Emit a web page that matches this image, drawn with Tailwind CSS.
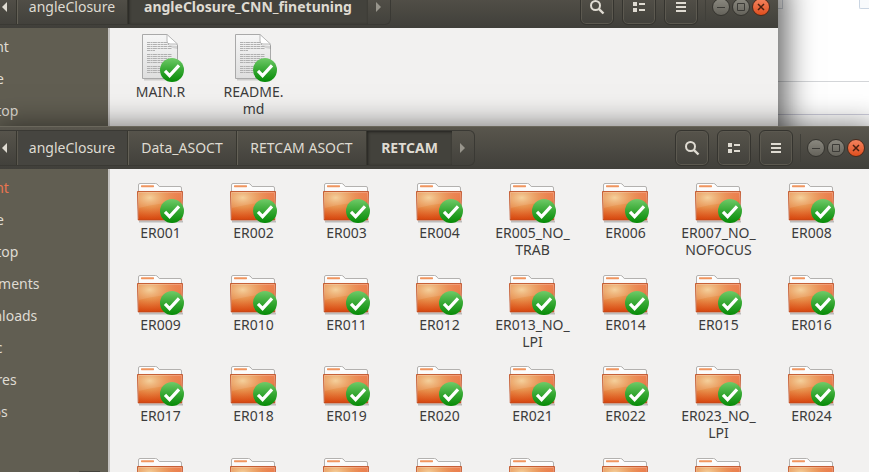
<!DOCTYPE html>
<html lang="en">
<head>
<meta charset="utf-8">
<title>Files</title>
<script src="https://cdn.jsdelivr.net/npm/@tailwindcss/browser@4"></script>
</head>
<body class="relative h-screen overflow-hidden bg-white font-['Noto_Sans',sans-serif] text-sm">

<svg class="absolute size-0" aria-hidden="true">
  <defs>
    <linearGradient id="gBody" x1="0" y1="0" x2="0" y2="1"><stop offset="0" stop-color="#ec7442"/><stop offset=".55" stop-color="#e36c30"/><stop offset="1" stop-color="#d6470f"/></linearGradient>
    <radialGradient id="gGlow" cx=".27" cy=".22" r=".75"><stop offset="0" stop-color="#f4cc92"/><stop offset=".45" stop-color="#e9a058" stop-opacity=".7"/><stop offset="1" stop-color="#e6702f" stop-opacity="0"/></radialGradient>
    <linearGradient id="gTab" x1="0" y1="0" x2="0" y2="1"><stop offset="0" stop-color="#ffffff"/><stop offset=".6" stop-color="#fafafa"/><stop offset="1" stop-color="#d4d2d0"/></linearGradient>
    <linearGradient id="gCheck" x1="0" y1="0" x2="0" y2="1"><stop offset="0" stop-color="#6fca68"/><stop offset=".5" stop-color="#36a833"/><stop offset="1" stop-color="#058a05"/></linearGradient>
    <linearGradient id="gPage" x1="0" y1="0" x2="0" y2="1"><stop offset="0" stop-color="#f6f6f6"/><stop offset="1" stop-color="#dedede"/></linearGradient>
  </defs>
  <symbol id="check" viewBox="0 0 24 24">
    <circle cx="12" cy="12" r="12" fill="url(#gCheck)"/>
    <path d="M5 12.8 9.6 17.6 19 7.4" fill="none" stroke="#fff" stroke-width="3.2"/>
  </symbol>
  <symbol id="folder" viewBox="0 0 52 41">
    <path d="M3 38.500h44" stroke="#000" stroke-opacity=".22" stroke-width="2"/>
    <path d="M2.500 12V2q0-1.500 1.500-1.500h15.500q1.500 0 2.500 1.500l1.200 1.500H44q1.500 0 1.500 1.500v7z" fill="url(#gTab)" stroke="#b3b1af"/>
    <rect x="5" y="2.200" width="13" height="2" rx=".6" fill="#f0955f"/>
    <path d="M1.500 8.500h45l-.7 28.500h-43.600z" fill="url(#gBody)"/>
    <path d="M1.500 8.500h45l-.7 28.500h-43.600z" fill="url(#gGlow)"/>
    <path d="M2.500 9.500h43l-.3 9q-20 1-42.400 6.500z" fill="#fff" fill-opacity=".1"/>
    <path d="M2.500 36V9.500H45.500V36" fill="none" stroke="#fff" stroke-opacity=".25"/>
    <path d="M1.500 8.500h45l-.7 28.500h-43.600z" fill="none" stroke="#b8451c" stroke-opacity=".75"/>
    <use href="#check" x="24" y="16" width="24" height="24"/>
  </symbol>
  <symbol id="page" viewBox="0 0 52 49">
    <path d="M8 45.500h35" stroke="#000" stroke-opacity=".15" stroke-width="2"/>
    <path d="M6.500.500H31L41.500 11v33.500h-35z" fill="url(#gPage)" stroke="#a9a9a9"/>
    <path d="M31 .500V7q0 3 3 3h7.500z" fill="#fff" stroke="#b9b9b9"/>
    <path d="M32 8.500q.5 2.500 3 3l6.500.500v3q-9-1-9.500-6.500z" fill="#000" fill-opacity=".12"/>
    <path d="M11 8.500h20M11 10.500h22M11 12.500h25M11 14.500h25M11 16.500h8M11 20.500h25M11 22.500h25M11 24.500h22M11 26.500h25M11 28.500h21M11 32.500h25M11 34.500h13M11 36.500h25M11 38.500h14" stroke="#b0b0b0" stroke-dasharray="3 .5 2 .4 4 .6"/>
    <use href="#check" x="24" y="24" width="24" height="24"/>
  </symbol>
  <symbol id="search" viewBox="0 0 16 16">
    <circle cx="6.500" cy="6.500" r="4.500" fill="none" stroke="#dfdbd2" stroke-width="2"/>
    <path d="M9.800 9.800 14.500 14.500" stroke="#dfdbd2" stroke-width="2.400"/>
  </symbol>
  <symbol id="views" viewBox="0 0 16 16"><path d="M2 3h4v4H2zM2 9h4v4H2zM8 4h6v2H8zM8 10h6v2H8z" fill="#dfdbd2"/></symbol>
  <symbol id="menu" viewBox="0 0 16 16"><path d="M3 3h10v2H3zM3 7h10v2H3zM3 11h10v2H3z" fill="#dfdbd2"/></symbol>
  <symbol id="min" viewBox="0 0 18 18"><path d="M5 9.500h8" stroke="#3c3b37"/></symbol>
  <symbol id="max" viewBox="0 0 18 18"><path d="M5.500 5.500h7v7h-7z" fill="none" stroke="#3c3b37"/></symbol>
  <symbol id="close" viewBox="0 0 18 18"><path d="M6 6l6 6M12 6l-6 6" stroke="#4a2010" stroke-width="1.500"/></symbol>
</svg>

<!-- Page behind the windows -->
<main class="absolute inset-0 flex flex-col items-stretch" aria-hidden="true">
  <div class="flex h-[81px] items-start justify-end">
    <div class="mr-[76px] h-[9px] w-8 border-r border-b border-gray-300"></div>
    <div class="h-[9px] w-[10px] rounded-bl-xs border-b border-l border-slate-300 bg-slate-50"></div>
  </div>
  <div class="h-[33px] border-t border-[#d3d5d8]"></div>
  <div class="grow border-t border-[#d0d0de]"></div>
</main>

<!-- Rear window -->
<section class="absolute top-[-15px] right-[91px] left-0 flex h-[170px] flex-col shadow-[0_4px_28px_8px_rgba(0,0,0,0.62)]" aria-label="angleClosure_CNN_finetuning">
  <header class="flex h-[43px] shrink-0 items-center justify-between border-t border-[#6a675c] bg-linear-to-b from-[#59564d] to-[#403f3a] pr-[8px]">
    <nav class="flex h-9 items-stretch rounded-r-md border border-l-0 border-[#3a3934] text-[#dfdbd2]" aria-label="Path">
      <button class="flex w-4 items-center" aria-label="Back"><svg class="h-3 w-2" viewBox="0 0 8 12"><path d="M7 1v10L2 6z" fill="#dfdbd2"/></svg></button>
      <button class="w-[111px] border-l border-[#37362f] shadow-[inset_1px_0_#646157]">angleClosure</button>
      <button class="w-[241px] border-l border-[#37362f] bg-[#43423c] font-bold shadow-[inset_1px_1px_3px_rgba(0,0,0,0.5)]">angleClosure_CNN_finetuning</button>
      <button class="flex w-[22px] items-center justify-center" aria-label="Forward"><svg class="h-3 w-2" viewBox="0 0 8 12"><path d="M1 1v10L6 6z" fill="#98958c"/></svg></button>
    </nav>
    <div class="flex items-center">
      <div class="flex gap-2">
        <button class="flex h-9 w-[34px] items-center justify-center rounded-md border border-[#35342f] shadow-[inset_0_0_0_1px_#5c5950]" aria-label="Search"><svg class="size-4"><use href="#search"/></svg></button>
        <button class="flex h-9 w-[34px] items-center justify-center rounded-md border border-[#35342f] shadow-[inset_0_0_0_1px_#5c5950]" aria-label="View"><svg class="size-4"><use href="#views"/></svg></button>
        <button class="flex h-9 w-[34px] items-center justify-center rounded-md border border-[#35342f] shadow-[inset_0_0_0_1px_#5c5950]" aria-label="Menu"><svg class="size-4"><use href="#menu"/></svg></button>
      </div>
      <div class="mr-[6px] ml-[7px] h-7 w-px bg-[#403f39]"></div>
      <div class="flex gap-[2px]">
        <button class="size-[18px] rounded-full border border-[#35342f] bg-linear-to-b from-[#8a887f] to-[#65635b]" aria-label="Minimize"><svg class="size-4" viewBox="1 1 16 16"><use href="#min" width="18" height="18"/></svg></button>
        <button class="size-[18px] rounded-full border border-[#35342f] bg-linear-to-b from-[#8a887f] to-[#65635b]" aria-label="Maximize"><svg class="size-4" viewBox="1 1 16 16"><use href="#max" width="18" height="18"/></svg></button>
        <button class="size-[18px] rounded-full border border-[#4a2a1c] bg-linear-to-b from-[#f4825c] to-[#e04e1b]" aria-label="Close"><svg class="size-4" viewBox="1 1 16 16"><use href="#close" width="18" height="18"/></svg></button>
      </div>
    </div>
  </header>
  <div class="flex grow overflow-hidden">
    <aside class="w-[110px] shrink-0 overflow-hidden border-r-2 border-[#c4c2c0] bg-[#615e52] pt-[3px] text-[#dfdbd2]">
      <ul class="-ml-9 leading-8"><li>Recent</li><li>Home</li><li>Desktop</li></ul>
    </aside>
    <div class="grid grow grid-cols-[repeat(auto-fill,93px)] bg-[#f2f1f0] pt-[6px] pl-[4px] text-[#3c3c3c]" data-items="MAIN.R|README./md" data-icon="page"></div>
  </div>
</section>

<!-- Front window -->
<section class="absolute top-[126px] right-[-4px] bottom-0 left-0 flex flex-col shadow-[0_4px_28px_4px_rgba(0,0,0,0.55)]" aria-label="RETCAM">
  <header class="flex h-[43px] shrink-0 items-center justify-between border-t border-[#6a675c] bg-linear-to-b from-[#59564d] to-[#403f3a] pr-[8px]">
    <nav class="flex h-9 items-stretch rounded-r-md border border-l-0 border-[#3a3934] text-[#dfdbd2]" aria-label="Path">
      <button class="flex w-4 items-center" aria-label="Back"><svg class="h-3 w-2" viewBox="0 0 8 12"><path d="M7 1v10L2 6z" fill="#dfdbd2"/></svg></button>
      <button class="w-[111px] border-l border-[#37362f] bg-[#464540] shadow-[inset_1px_0_#5c5950]">angleClosure</button>
      <button class="w-[109px] border-l border-[#37362f] shadow-[inset_1px_0_#646157]">Data_ASOCT</button>
      <button class="w-[130px] border-l border-[#37362f] shadow-[inset_1px_0_#646157]">RETCAM ASOCT</button>
      <button class="w-[86px] border-l border-[#37362f] bg-[#43423c] font-bold shadow-[inset_1px_1px_3px_rgba(0,0,0,0.5)]">RETCAM</button>
      <button class="flex w-[22px] items-center justify-center" aria-label="Forward"><svg class="h-3 w-2" viewBox="0 0 8 12"><path d="M1 1v10L6 6z" fill="#98958c"/></svg></button>
    </nav>
    <div class="flex items-center">
      <div class="flex gap-2">
        <button class="flex h-9 w-[34px] items-center justify-center rounded-md border border-[#35342f] shadow-[inset_0_0_0_1px_#5c5950]" aria-label="Search"><svg class="size-4"><use href="#search"/></svg></button>
        <button class="flex h-9 w-[34px] items-center justify-center rounded-md border border-[#35342f] shadow-[inset_0_0_0_1px_#5c5950]" aria-label="View"><svg class="size-4"><use href="#views"/></svg></button>
        <button class="flex h-9 w-[34px] items-center justify-center rounded-md border border-[#35342f] shadow-[inset_0_0_0_1px_#5c5950]" aria-label="Menu"><svg class="size-4"><use href="#menu"/></svg></button>
      </div>
      <div class="mr-[6px] ml-[7px] h-7 w-px bg-[#403f39]"></div>
      <div class="flex gap-[2px]">
        <button class="size-[18px] rounded-full border border-[#35342f] bg-linear-to-b from-[#8a887f] to-[#65635b]" aria-label="Minimize"><svg class="size-4" viewBox="1 1 16 16"><use href="#min" width="18" height="18"/></svg></button>
        <button class="size-[18px] rounded-full border border-[#35342f] bg-linear-to-b from-[#8a887f] to-[#65635b]" aria-label="Maximize"><svg class="size-4" viewBox="1 1 16 16"><use href="#max" width="18" height="18"/></svg></button>
        <button class="size-[18px] rounded-full border border-[#4a2a1c] bg-linear-to-b from-[#f4825c] to-[#e04e1b]" aria-label="Close"><svg class="size-4" viewBox="1 1 16 16"><use href="#close" width="18" height="18"/></svg></button>
      </div>
    </div>
  </header>
  <div class="flex min-h-0 grow overflow-hidden">
    <aside class="flex w-[110px] shrink-0 flex-col justify-between overflow-hidden border-r-2 border-[#c4c2c0] bg-[#615e52] pt-[3px] text-[#dfdbd2]">
      <ul class="-ml-9 leading-8"><li class="text-[#ea7550]">Recent</li><li>Home</li><li>Desktop</li><li>Documents</li><li>Downloads</li><li>Music</li><li>Pictures</li><li>Videos</li></ul>
      <div class="mr-2 h-px w-[21px] self-end bg-[#45433c]"></div>
    </aside>
    <div class="grid grow auto-rows-[92px] grid-cols-[repeat(auto-fill,93px)] grid-rows-[92px_91px_92px] bg-[#f2f1f0] pt-[14px] pl-[4px] text-[#3c3c3c]" data-items="ER001|ER002|ER003|ER004|ER005_NO_/TRAB|ER006|ER007_NO_/NOFOCUS|ER008|ER009|ER010|ER011|ER012|ER013_NO_/LPI|ER014|ER015|ER016|ER017|ER018|ER019|ER020|ER021|ER022|ER023_NO_/LPI|ER024|ER025|ER026|ER027|ER028|ER029|ER030|ER031|ER032" data-icon="folder"></div>
  </div>
</section>

<script>
  const sizes = { folder: 'h-[41px] w-[52px]', page: 'h-[49px] w-[52px]' };
  document.querySelectorAll('[data-items]').forEach(grid => {
    const icon = grid.dataset.icon;
    grid.innerHTML = grid.dataset.items.split('|').map(name =>
      `<figure class="flex flex-col items-center"><svg class="ml-[2px] shrink-0 ${sizes[icon]}" aria-hidden="true"><use href="#${icon}"/></svg><figcaption class="text-center leading-[17px]">${name.replace('/', '<br>')}</figcaption></figure>`
    ).join('');
  });
</script>
</body>
</html>
